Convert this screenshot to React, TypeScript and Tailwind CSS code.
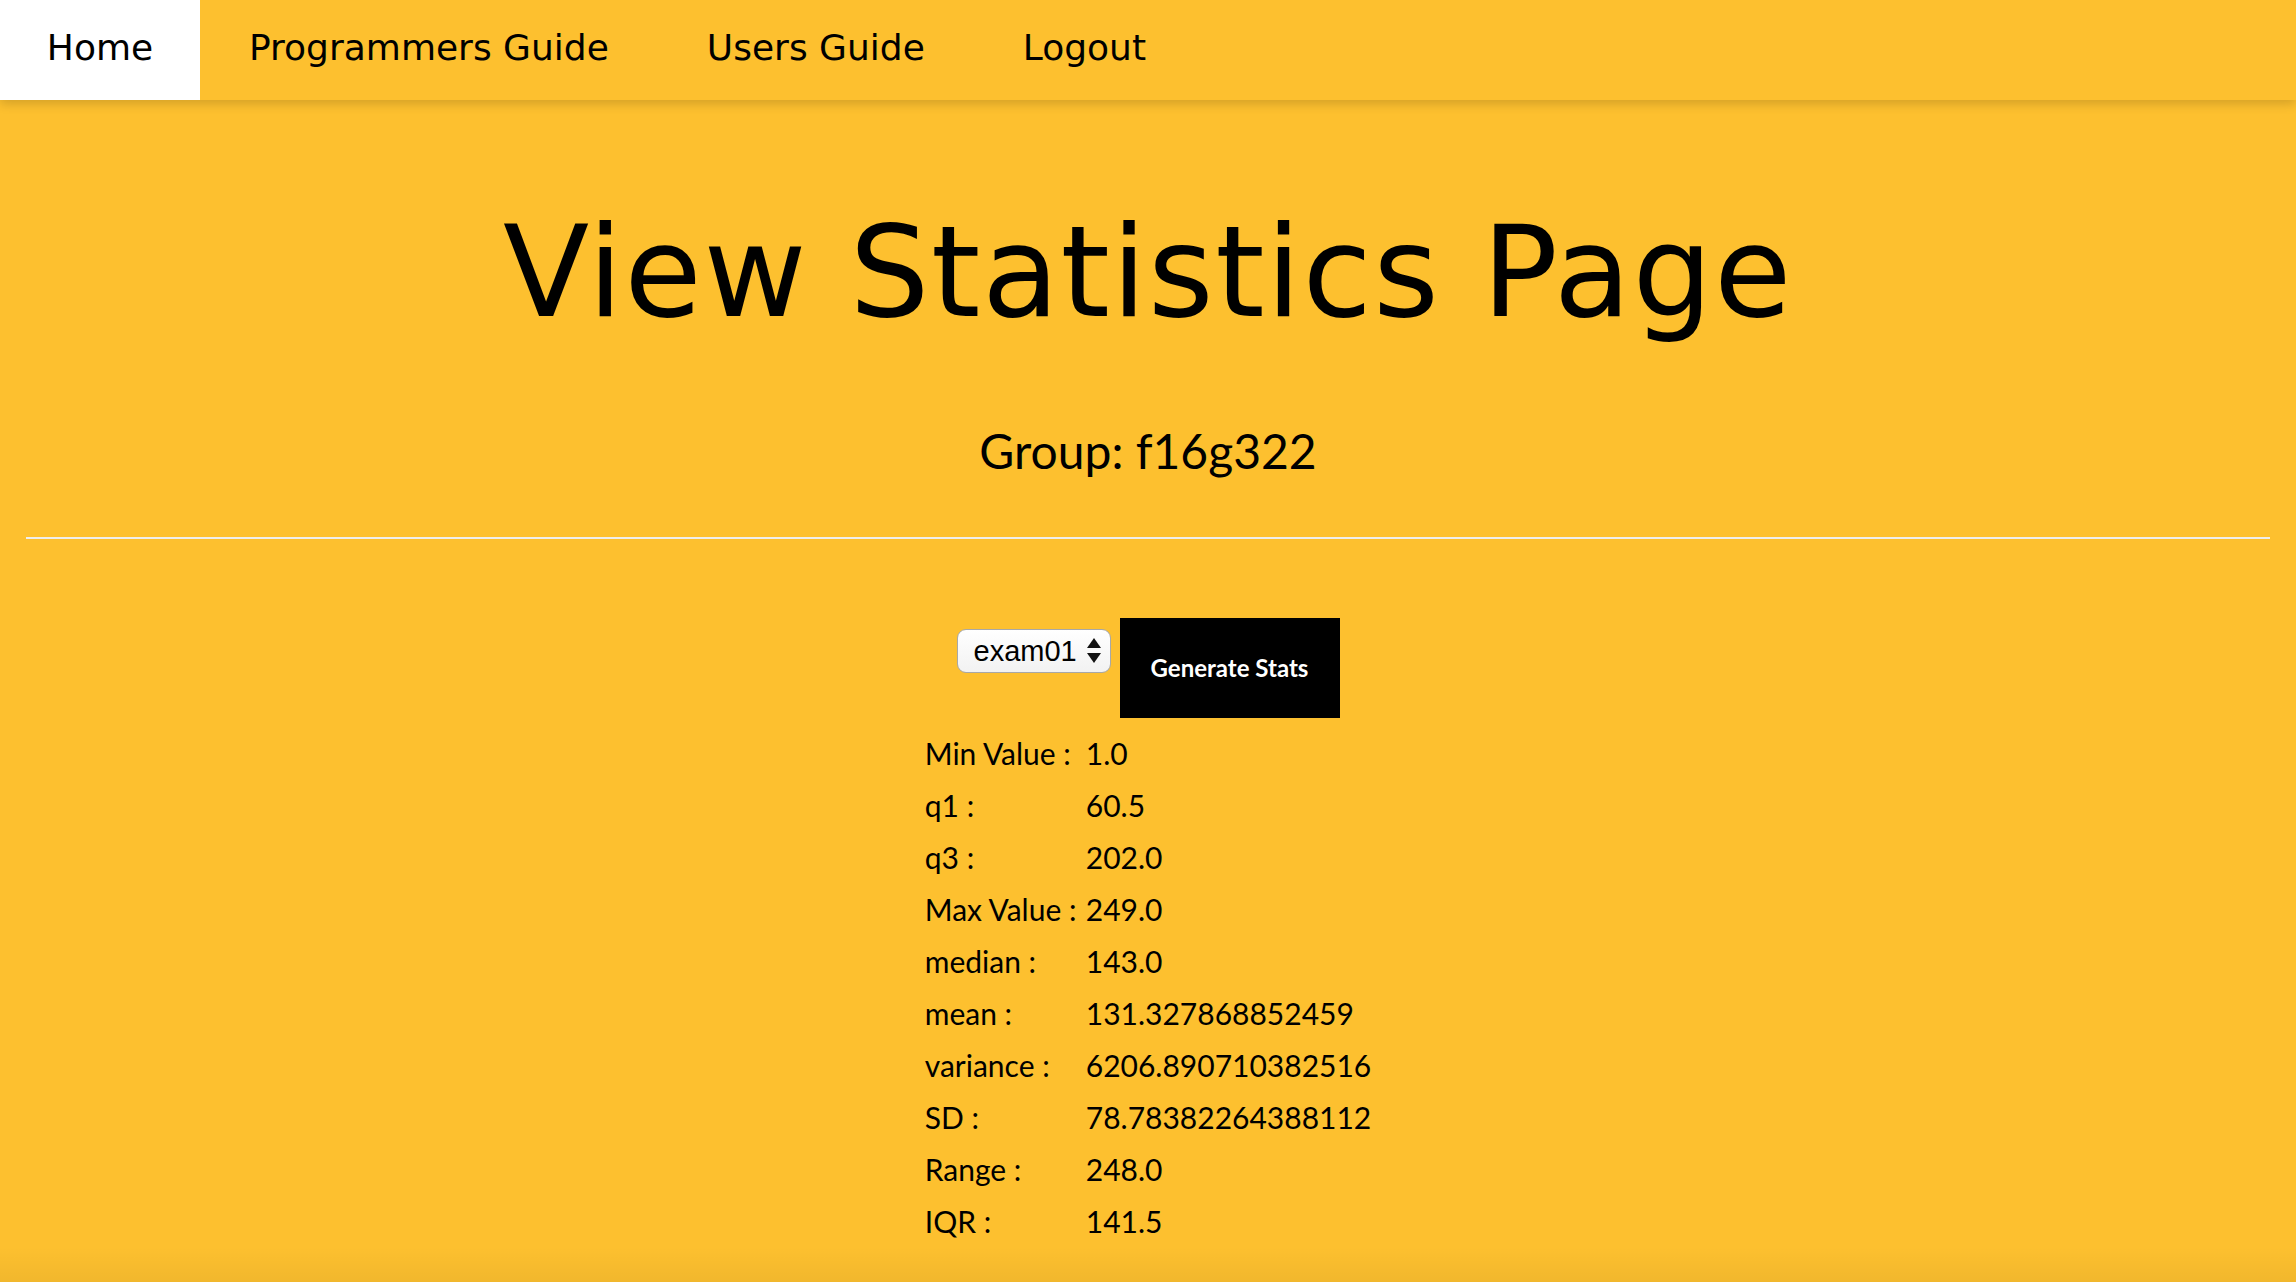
import React from "react"

const stats: [string, string][] = [
  ["Min Value :", "1.0"],
  ["q1 :", "60.5"],
  ["q3 :", "202.0"],
  ["Max Value :", "249.0"],
  ["median :", "143.0"],
  ["mean :", "131.327868852459"],
  ["variance :", "6206.890710382516"],
  ["SD :", "78.78382264388112"],
  ["Range :", "248.0"],
  ["IQR :", "141.5"],
]

const navFont = { fontFamily: '"DejaVu Sans", sans-serif' }

export default function App() {
  return (
    <div className="min-h-screen w-full bg-[#fdc02f] text-black flex flex-col overflow-hidden" style={{ fontFamily: "Lato, sans-serif" }}>
      {/* Top bar */}
      <nav className="relative z-10 flex h-[100px] w-full items-stretch bg-[#fdc02f] shadow-[0_4px_10px_rgba(0,0,0,0.16)]" style={navFont}>
        <a className="flex w-[200px] items-center justify-center bg-white pb-[5px] text-[36px] leading-none">Home</a>
        <a className="flex items-center px-[49px] pb-[5px] text-[36px] leading-none">Programmers Guide</a>
        <a className="flex items-center px-[49px] pb-[5px] text-[36px] leading-none">Users Guide</a>
        <a className="flex items-center px-[49px] pb-[5px] text-[36px] leading-none">Logout</a>
      </nav>

      {/* Heading */}
      <h1 className="mt-[110px] text-center text-[126px] leading-none tracking-[1.5px]" style={navFont}>
        View Statistics Page
      </h1>

      <h2 className="mt-[91px] text-center text-[48px] leading-none">Group: f16g322</h2>

      <hr className="mx-[26px] mt-[62px] border-0 border-t-2 border-[#eeeeee]" />

      {/* Controls */}
      <div className="mt-[79px] flex items-start justify-center gap-[9px]">
        <div className="mt-[11px] flex h-[44px] w-[154px] items-center justify-between rounded-[9px] border-[1.5px] border-[#a8a8a8] bg-gradient-to-b from-white to-[#f2f2f2] pl-[16px] pr-[9px]">
          <span className="text-[29px] leading-none" style={{ fontFamily: '"Liberation Sans", Arial, sans-serif' }}>
            exam01
          </span>
          <svg width="14" height="26" viewBox="0 0 14 26">
            <path d="M7 0 L14 10 L0 10 Z" fill="#111" />
            <path d="M0 15 L14 15 L7 25 Z" fill="#111" />
          </svg>
        </div>
        <button className="flex h-[100px] w-[220px] items-center justify-center bg-black text-[24px] font-bold text-white">
          Generate Stats
        </button>
      </div>

      {/* Stats table */}
      <div className="mt-[9px] flex justify-center">
        <div className="grid grid-cols-[161px_auto] text-[30px] leading-[52px]">
          {stats.map(([label, value]) => (
            <React.Fragment key={label}>
              <div className="whitespace-nowrap">{label}</div>
              <div className="whitespace-nowrap">{value}</div>
            </React.Fragment>
          ))}
        </div>
      </div>

      <div className="h-[52px] w-full bg-gradient-to-b from-transparent to-black/[0.07]" />
    </div>
  )
}
